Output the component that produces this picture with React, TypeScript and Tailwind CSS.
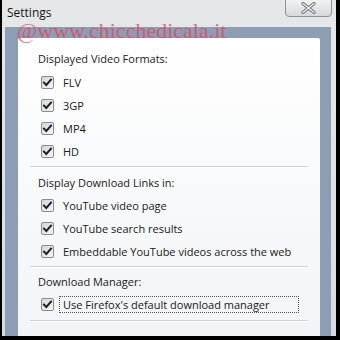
import React from "react";

const font = { fontFamily: '"Open Sans", "Noto Sans", sans-serif' };

function Check() {
  return (
    <div className="w-[13px] h-[13px] shrink-0 rounded-[2px] border border-[#8a8c8e] bg-gradient-to-br from-[#d4d6d8] to-[#f6f6f6] flex items-center justify-center">
      <svg width="11" height="11" viewBox="0 0 11 11">
        <path d="M2 5.6 L4.3 8 L9 2.6" fill="none" stroke="#1c2026" strokeWidth="2" strokeLinecap="square" />
      </svg>
    </div>
  );
}

function Row({ label, focus }: { label: string; focus?: boolean }) {
  return (
    <div className="h-[23px] flex items-center pl-[3px] whitespace-nowrap">
      <Check />
      {focus ? (
        <span className="ml-[5px] w-[240px] h-[17px] flex items-center pl-[3px] border border-dotted border-[#555]">{label}</span>
      ) : (
        <span className="ml-[9px]">{label}</span>
      )}
    </div>
  );
}

function Sep() {
  return <div className="mx-[12px] h-[2px] border-t border-[#cfd1d3] bg-white" />;
}

export default function App() {
  return (
    <div className="w-[340px] h-[340px] bg-black pl-[2px] pr-[4px] pb-[4px] overflow-hidden">
      <div className="relative h-full flex flex-col bg-gradient-to-b from-[#e6e7e9] to-[#d8dce1]" style={font}>
        <div className="h-[27px] flex items-start shrink-0">
          <span className="ml-[5px] mt-[5px] text-[12px] leading-[16px] text-[#151515]">Settings</span>
          <div className="ml-auto mr-[4px] -mt-[2px] w-[47px] h-[19px] rounded-b-[4px] border border-[#8f9296] bg-gradient-to-b from-[#f4f4f4] to-[#d6d8da] flex items-center justify-center">
            <svg width="15" height="12" viewBox="0 0 15 12">
              <path d="M2 1.5 L13 10.5 M13 1.5 L2 10.5" stroke="#6b6e72" strokeWidth="3.2" strokeLinecap="round" />
              <path d="M2 1.5 L13 10.5 M13 1.5 L2 10.5" stroke="#f4f4f4" strokeWidth="1.4" strokeLinecap="round" />
            </svg>
          </div>
        </div>
        <div className="flex-1 flex flex-col pl-[3px] pr-[5px]">
          <div className="flex-1 flex flex-col bg-[#8d9db4] pl-[13px] pr-[11px] pt-[11px]">
            <div className="flex-1 rounded-t-[2px] bg-gradient-to-b from-white to-[#f2f4f7] text-[11px] leading-[16px] text-[#1a1a1a] flex flex-col">
              <div className="pt-[13px] px-[20px]">
                <div className="h-[16px]">Displayed Video Formats:</div>
                <div className="mt-[4px]">
                  <Row label="FLV" />
                  <Row label="3GP" />
                  <Row label="MP4" />
                  <Row label="HD" />
                </div>
              </div>
              <div className="mt-[3px]"><Sep /></div>
              <div className="pt-[7px] px-[20px]">
                <div className="h-[16px]">Display Download Links in:</div>
                <div className="mt-[3px]">
                  <Row label="YouTube video page" />
                  <Row label="YouTube search results" />
                  <Row label="Embeddable YouTube videos across the web" />
                </div>
              </div>
              <div className="mt-[3px]"><Sep /></div>
              <div className="pt-[6px] px-[20px]">
                <div className="h-[16px]">Download Manager:</div>
                <div className="mt-[3px]">
                  <Row label="Use Firefox's default download manager" focus />
                </div>
              </div>
              <div className="mt-[4px]"><Sep /></div>
            </div>
          </div>
        </div>
        <div
          className="absolute left-[15px] top-[20px] text-[22px] leading-none text-[#e0485e] opacity-75 pointer-events-none whitespace-nowrap"
          style={{ fontFamily: '"Liberation Serif", serif' }}
        >
          @www.chicchedicala.it
        </div>
      </div>
    </div>
  );
}
